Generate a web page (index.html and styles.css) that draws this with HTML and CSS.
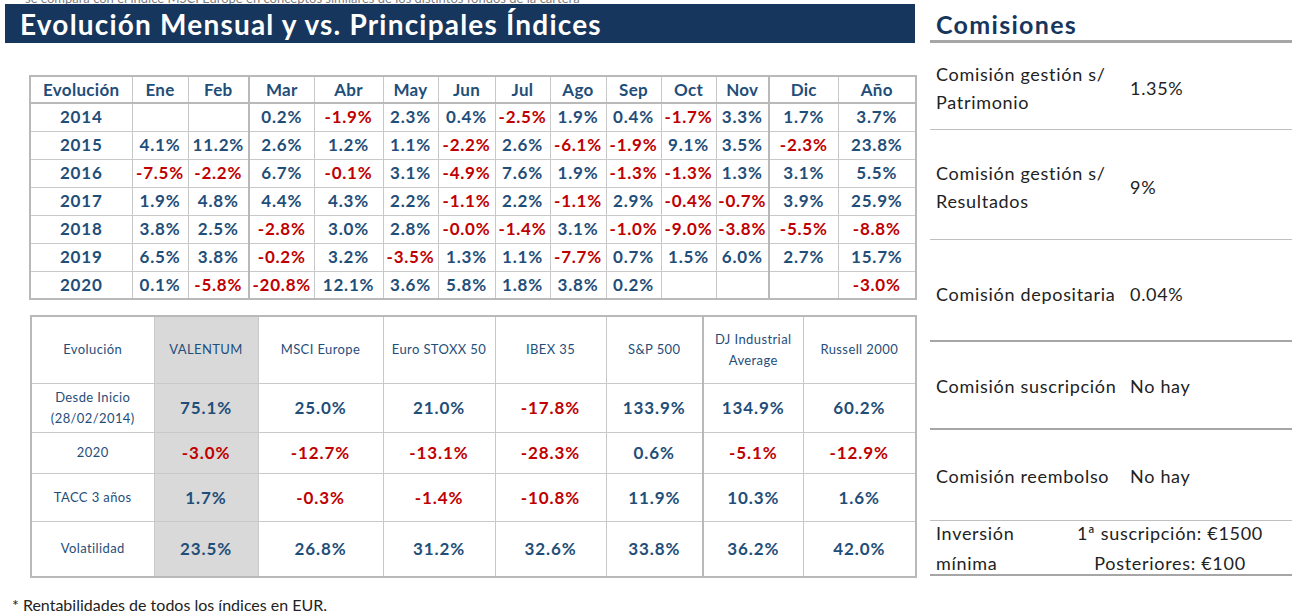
FILE: index.html
```html
<!DOCTYPE html>
<html lang="es">
<head>
<meta charset="utf-8">
<title>Evolución Mensual</title>
<link rel="stylesheet" href="styles.css">
</head>
<body>
<div class="page">
  <div class="left">
    <div class="top-strip"><span>se compara con el índice MSCI Europe en conceptos similares de los distintos fondos de la cartera</span></div>
    <div class="title-bar">Evolución Mensual y vs. Principales Índices</div>

    <table class="t1">
      <colgroup>
        <col class="c-evo"><col class="c56"><col class="c61"><col class="c65"><col class="c69"><col class="c55"><col class="c57"><col class="c55"><col class="c56"><col class="c55"><col class="c55"><col class="c53"><col class="c69"><col class="c78">
      </colgroup>
      <thead>
        <tr><th>Evolución</th><th>Ene</th><th class="sep">Feb</th><th>Mar</th><th>Abr</th><th>May</th><th>Jun</th><th>Jul</th><th>Ago</th><th>Sep</th><th>Oct</th><th class="sep">Nov</th><th>Dic</th><th>Año</th></tr>
      </thead>
      <tbody>
        <tr><td>2014</td><td></td><td class="sep"></td><td>0.2%</td><td class="n">-1.9%</td><td>2.3%</td><td>0.4%</td><td class="n">-2.5%</td><td>1.9%</td><td>0.4%</td><td class="n">-1.7%</td><td class="sep">3.3%</td><td>1.7%</td><td>3.7%</td></tr>
        <tr><td>2015</td><td>4.1%</td><td class="sep">11.2%</td><td>2.6%</td><td>1.2%</td><td>1.1%</td><td class="n">-2.2%</td><td>2.6%</td><td class="n">-6.1%</td><td class="n">-1.9%</td><td>9.1%</td><td class="sep">3.5%</td><td class="n">-2.3%</td><td>23.8%</td></tr>
        <tr><td>2016</td><td class="n">-7.5%</td><td class="sep n">-2.2%</td><td>6.7%</td><td class="n">-0.1%</td><td>3.1%</td><td class="n">-4.9%</td><td>7.6%</td><td>1.9%</td><td class="n">-1.3%</td><td class="n">-1.3%</td><td class="sep">1.3%</td><td>3.1%</td><td>5.5%</td></tr>
        <tr><td>2017</td><td>1.9%</td><td class="sep">4.8%</td><td>4.4%</td><td>4.3%</td><td>2.2%</td><td class="n">-1.1%</td><td>2.2%</td><td class="n">-1.1%</td><td>2.9%</td><td class="n">-0.4%</td><td class="sep n">-0.7%</td><td>3.9%</td><td>25.9%</td></tr>
        <tr><td>2018</td><td>3.8%</td><td class="sep">2.5%</td><td class="n">-2.8%</td><td>3.0%</td><td>2.8%</td><td class="n">-0.0%</td><td class="n">-1.4%</td><td>3.1%</td><td class="n">-1.0%</td><td class="n">-9.0%</td><td class="sep n">-3.8%</td><td class="n">-5.5%</td><td class="n">-8.8%</td></tr>
        <tr><td>2019</td><td>6.5%</td><td class="sep">3.8%</td><td class="n">-0.2%</td><td>3.2%</td><td class="n">-3.5%</td><td>1.3%</td><td>1.1%</td><td class="n">-7.7%</td><td>0.7%</td><td>1.5%</td><td class="sep">6.0%</td><td>2.7%</td><td>15.7%</td></tr>
        <tr><td>2020</td><td>0.1%</td><td class="sep n">-5.8%</td><td class="n">-20.8%</td><td>12.1%</td><td>3.6%</td><td>5.8%</td><td>1.8%</td><td>3.8%</td><td>0.2%</td><td></td><td class="sep"></td><td></td><td class="n">-3.0%</td></tr>
      </tbody>
    </table>

    <table class="t2">
      <colgroup>
        <col class="d123"><col class="d104"><col class="d125"><col class="d112"><col class="d111"><col class="d97"><col class="d100"><col class="d113">
      </colgroup>
      <thead>
        <tr class="r-head"><th>Evolución</th><th class="hl">VALENTUM</th><th>MSCI Europe</th><th>Euro STOXX 50</th><th>IBEX 35</th><th class="sep">S&amp;P 500</th><th>DJ Industrial<br>Average</th><th>Russell 2000</th></tr>
      </thead>
      <tbody>
        <tr class="r1"><th>Desde Inicio<br>(28/02/2014)</th><td class="hl">75.1%</td><td>25.0%</td><td>21.0%</td><td class="n">-17.8%</td><td class="sep">133.9%</td><td>134.9%</td><td>60.2%</td></tr>
        <tr class="r2"><th>2020</th><td class="hl n">-3.0%</td><td class="n">-12.7%</td><td class="n">-13.1%</td><td class="n">-28.3%</td><td class="sep">0.6%</td><td class="n">-5.1%</td><td class="n">-12.9%</td></tr>
        <tr class="r3"><th>TACC 3 años</th><td class="hl">1.7%</td><td class="n">-0.3%</td><td class="n">-1.4%</td><td class="n">-10.8%</td><td class="sep">11.9%</td><td>10.3%</td><td>1.6%</td></tr>
        <tr class="r4"><th>Volatilidad</th><td class="hl">23.5%</td><td>26.8%</td><td>31.2%</td><td>32.6%</td><td class="sep">33.8%</td><td>36.2%</td><td>42.0%</td></tr>
      </tbody>
    </table>

    <p class="footnote">* Rentabilidades de todos los índices en EUR.</p>
  </div>

  <div class="right">
    <h2 class="heading">Comisiones</h2>
    <div class="fee f1 thin"><div class="lab">Comisión gestión s/<br>Patrimonio</div><div class="val">1.35%</div></div>
    <div class="fee f2 thin"><div class="lab">Comisión gestión s/<br>Resultados</div><div class="val">9%</div></div>
    <div class="fee f3 thick"><div class="lab">Comisión depositaria</div><div class="val">0.04%</div></div>
    <div class="fee f4 thick"><div class="lab">Comisión suscripción</div><div class="val">No hay</div></div>
    <div class="fee f5 thin"><div class="lab">Comisión reembolso</div><div class="val">No hay</div></div>
    <div class="fee f6 thick"><div class="lab">Inversión<br>mínima</div><div class="val2">1ª suscripción: €1500<br>Posteriores: €100</div></div>
  </div>
</div>
</body>
</html>
```

FILE: styles.css
```css
* { box-sizing: border-box; }
html, body { margin: 0; padding: 0; background: #fff; }
body { font-family: "Lato", "Liberation Sans", sans-serif; color: #1f1f1f; }

.page { display: flex; align-items: flex-start; padding-left: 5px; width: 1309px; height: 614px; overflow: hidden; }
.left { width: 910px; flex: none; }

.top-strip { height: 4px; overflow: hidden; display: flex; align-items: flex-end; padding-left: 20px; }
.top-strip span { font-size: 13px; line-height: 12px; color: #7f7f7f; white-space: nowrap; }

.title-bar {
  height: 39px; background: #17365d; color: #fff;
  font-weight: 700; font-size: 28px; letter-spacing: 1.2px;
  display: flex; align-items: center; padding-left: 15px; padding-top: 1px;
}

table { border-collapse: collapse; table-layout: fixed; }

.t1 { width: 886px; margin: 32px 0 0 24px; border: 2px solid #b9b9b9; }
.t1 th, .t1 td {
  border: 1px solid #c9c9c9; text-align: center; padding: 0;
  font-weight: 700; font-size: 17px; letter-spacing: 0.8px; color: #1f4e79; white-space: nowrap;
}
.t1 thead th { height: 27px; border-bottom: 2px solid #b9b9b9; border-top: 2px solid #b9b9b9; letter-spacing: 0.3px; }
.t1 td { height: 28px; line-height: 20px; }
.t1 .sep { border-right: 2px solid #b9b9b9; }
.n { color: #c00000 !important; }

.c-evo { width: 102px; } .c56 { width: 56px; } .c61 { width: 61px; } .c65 { width: 65px; }
.c69 { width: 69px; } .c55 { width: 55px; } .c57 { width: 57px; } .c53 { width: 53px; } .c78 { width: 78px; }

.t2 { width: 885px; margin: 15px 0 0 25px; border: 2px solid #b9b9b9; }
.t2 th, .t2 td { border: 1px solid #c9c9c9; text-align: center; padding: 0; color: #1f4e79; }
.t2 th { font-weight: 400; font-size: 13px; letter-spacing: 0.4px; line-height: 21px; }
.t2 td { font-weight: 700; font-size: 17px; letter-spacing: 0.9px; }
.t2 .hl { background: #d9d9d9; }
.t2 .sep { border-right: 2px solid #b9b9b9; }
.t2 .r-head th { height: 67px; }
.t2 .r1 > * { height: 49px; }
.t2 .r2 > * { height: 41px; }
.t2 .r3 > * { height: 48px; }
.t2 .r4 > * { height: 56px; }

.d123 { width: 123px; } .d104 { width: 104px; } .d125 { width: 125px; } .d112 { width: 112px; }
.d111 { width: 111px; } .d97 { width: 97px; } .d100 { width: 100px; } .d113 { width: 113px; }

.footnote { margin: 18px 0 0 7px; font-size: 16px; line-height: 18px; color: #222; }

.right { width: 362px; margin-left: 15px; flex: none; }
.heading {
  margin: 0; height: 43px; padding: 10px 0 0 6px;
  font-size: 25px; font-weight: 700; letter-spacing: 1.3px; line-height: 28px;
  color: #17365d; border-bottom: 3px solid #a6a6a6;
}
.fee { display: flex; align-items: center; padding-left: 6px; font-size: 18px; letter-spacing: 0.7px; color: #222; }
.fee.thin { border-bottom: 1px solid #bfbfbf; }
.fee.thick { border-bottom: 2px solid #a6a6a6; }
.fee .lab { width: 194px; flex: none; line-height: 28px; white-space: nowrap; }
.f1 { height: 87px; padding-top: 4px; }
.f2 { height: 110px; padding-top: 4px; }
.f3 { height: 102px; padding-top: 8px; }
.f4 { height: 88px; padding-top: 2px; }
.f5 { height: 91px; padding-top: 2px; }
.f6 { height: 55px; }
.f6 .lab { width: 120px; line-height: 30px; }
.f6 .val2 { flex: 1; text-align: center; line-height: 30px; padding-right: 8px; white-space: nowrap; }
```
